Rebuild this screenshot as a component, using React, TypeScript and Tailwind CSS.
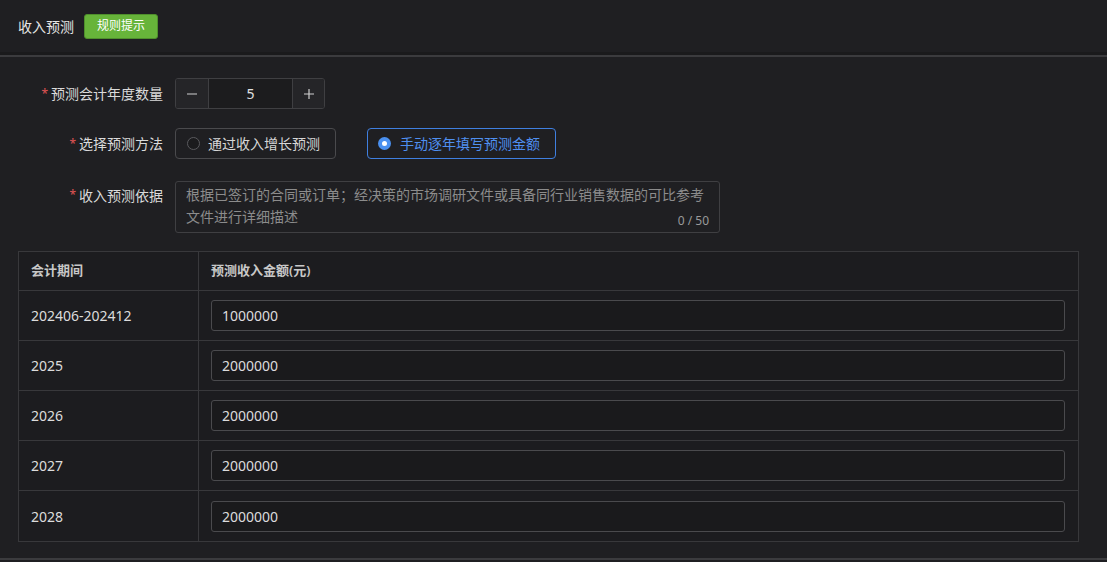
import React from "react";

const rows = [
  { period: "202406-202412", amount: "1000000" },
  { period: "2025", amount: "2000000" },
  { period: "2026", amount: "2000000" },
  { period: "2027", amount: "2000000" },
  { period: "2028", amount: "2000000" },
];

function Label({ text }: { text: string }) {
  return (
    <div className="w-[163px] shrink-0 flex justify-end items-center text-[14px] text-[#dadada]">
      <span className="text-[#e05555] mr-[3px] text-[12px]">*</span>
      <span>{text}</span>
    </div>
  );
}

export default function App() {
  return (
    <div
      className="w-[1107px] h-[562px] bg-[#1f1f22] overflow-hidden flex flex-col"
      style={{ fontFamily: '"Noto Sans", "Noto Sans CJK SC", sans-serif' }}
    >
      {/* header */}
      <div className="h-[52px] shrink-0 flex items-center pl-[18px] gap-[10px]">
        <span className="text-[14px] text-[#e6e6e6]">收入预测</span>
        <span className="h-[25px] w-[74px] flex items-center justify-center rounded-[3px] bg-[#67b43a] text-white text-[12px] border border-[#4f8f2c]">
          规则提示
        </span>
      </div>
      <div className="h-[3px] shrink-0 bg-[#1a1a1c]" />
      <div className="h-[2px] shrink-0 bg-[#3b3b3e]" />

      {/* form */}
      <div className="flex flex-col pt-[21px]">
        <div className="flex items-center h-[31px]">
          <Label text="预测会计年度数量" />
          <div className="ml-[12px] flex h-[31px] w-[150px] border border-[#3f3f42] rounded-[3px] overflow-hidden">
            <div className="w-[33px] bg-[#252528] border-r border-[#3f3f42] flex items-center justify-center text-[#cfcfcf]">
              <svg width="12" height="12" viewBox="0 0 12 12"><path d="M1 6h10" stroke="currentColor" strokeWidth="1.2" /></svg>
            </div>
            <div className="flex-1 bg-[#1c1c1e] flex items-center justify-center text-[14px] text-[#e0e0e0]">5</div>
            <div className="w-[32px] bg-[#252528] border-l border-[#3f3f42] flex items-center justify-center text-[#cfcfcf]">
              <svg width="12" height="12" viewBox="0 0 12 12"><path d="M1 6h10M6 1v10" stroke="currentColor" strokeWidth="1.2" /></svg>
            </div>
          </div>
        </div>

        <div className="flex items-center h-[31px] mt-[19px]">
          <Label text="选择预测方法" />
          <div className="ml-[12px] flex items-center gap-[31px]">
            <div className="h-[31px] w-[161px] border border-[#4a4a4d] rounded-[4px] flex items-center pl-[11px] gap-[8px]">
              <span className="w-[13px] h-[13px] rounded-full border border-[#5a5a5e] bg-[#1b1b1d]" />
              <span className="text-[14px] text-[#d6d6d6]">通过收入增长预测</span>
            </div>
            <div className="h-[31px] w-[189px] border border-[#3f7fe0] rounded-[4px] flex items-center pl-[10px] gap-[9px]">
              <span className="w-[13px] h-[13px] rounded-full bg-[#4a90f0] flex items-center justify-center">
                <span className="w-[5px] h-[5px] rounded-full bg-white" />
              </span>
              <span className="text-[14px] text-[#4f8ff0]">手动逐年填写预测金额</span>
            </div>
          </div>
        </div>

        <div className="flex items-start mt-[22px]">
          <div className="h-[28px] flex items-center">
            <Label text="收入预测依据" />
          </div>
          <div className="ml-[12px] w-[545px] h-[52px] border border-[#3f3f42] rounded-[3px] relative px-[10px] pt-[2px] text-[14px] leading-[22px] text-[#8c8c8c]">
            <div className="whitespace-nowrap">根据已签订的合同或订单；经决策的市场调研文件或具备同行业销售数据的可比参考</div>
            <div>文件进行详细描述</div>
            <span className="absolute right-[10px] bottom-[4px] text-[12px] leading-[14px] text-[#9a9a9a]">0 / 50</span>
          </div>
        </div>

        {/* table */}
        <div className="ml-[18px] mt-[18px] w-[1061px] border border-[#38383b] bg-[#1c1c1f]">
          <div className="flex h-[39px] border-b border-[#38383b] text-[13px] font-semibold text-[#c8c8c8]">
            <div className="w-[180px] border-r border-[#38383b] flex items-center pl-[12px]">会计期间</div>
            <div className="flex-1 flex items-center pl-[12px]">预测收入金额(元)</div>
          </div>
          {rows.map((r, i) => (
            <div
              key={i}
              className={`flex h-[50px] ${i < rows.length - 1 ? "border-b border-[#38383b]" : ""}`}
            >
              <div className="w-[180px] border-r border-[#38383b] flex items-center pl-[12px] text-[14px] text-[#dcdcdc]">
                {r.period}
              </div>
              <div className="flex-1 flex items-center pl-[12px] pr-[13px]">
                <div className="w-full h-[31px] border border-[#4a4a4d] rounded-[3px] bg-[#1a1a1c] flex items-center pl-[10px] text-[14px] text-[#dcdcdc]">
                  {r.amount}
                </div>
              </div>
            </div>
          ))}
        </div>
      </div>
      <div className="flex-1" />
      <div className="h-[2px] shrink-0 bg-[#3b3b3e] mb-[2px]" />
    </div>
  );
}
